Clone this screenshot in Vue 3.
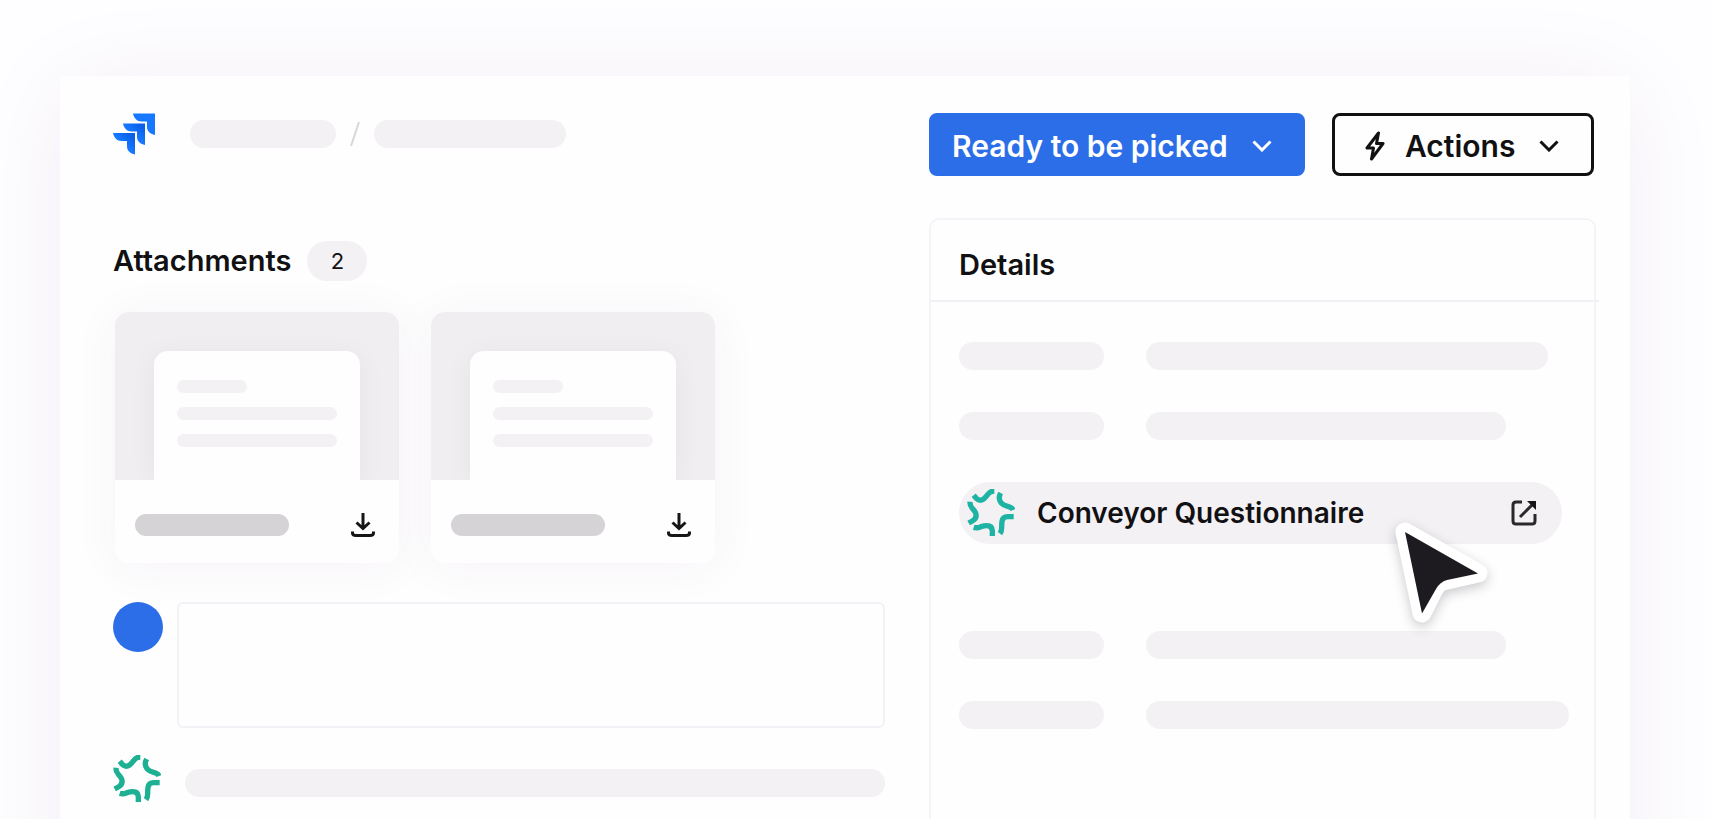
<script setup>
const attachments = [{ id: 1 }, { id: 2 }]

// widths of the value bars, in percent of their column
const rowsBefore = [95, 85]
const rowsAfter = [85, 100]

const spokes = [
  'M58 65 L66 74 Q76 84 88 76 Q93 72 100 63 Q107 52 120 52',
  'M139 58 Q130 74 140 87 Q147 95 160 98 Q173 101 176 109',
  'M178 129 H160 Q145 129 143 143 Q142 150 142 162 Q142 173 137 180',
  'M114 187 V171 Q113 156 98 156 Q90 156 80 159 Q68 164 58 161',
  'M43 148 L54 142 Q69 134 64 118 Q61 111 54 104 Q46 95 47 84',
]
</script>

<template>
  <main class="page">
    <section class="card">
      <div class="main">
        <nav class="crumbs" aria-label="Breadcrumb">
          <svg class="jira" viewBox="0 0 42 42" aria-hidden="true">
            <defs>
              <linearGradient id="fold" x1="1" y1="0" x2="0.3" y2="0.7">
                <stop offset="0.2" stop-color="#0b5fe8" />
                <stop offset="0.7" stop-color="#1677ff" />
              </linearGradient>
              <path id="piece" d="M0 0H22V21.500C17.500 20.500 14 18 14 13.500V8H8.500C4 8 1 4.500 0 0Z" />
            </defs>
            <use href="#piece" x="20" y="0.500" fill="#1677ff" />
            <use href="#piece" x="10" y="10.500" fill="url(#fold)" />
            <use href="#piece" x="0" y="20" fill="url(#fold)" />
          </svg>
          <span class="bar crumb"></span>
          <svg class="slash" viewBox="0 0 10 26" aria-hidden="true"><path d="M9 1L1 25" /></svg>
          <span class="bar crumb long"></span>
        </nav>

        <div class="heading">
          <h2>Attachments</h2>
          <span class="count">{{ attachments.length }}</span>
        </div>

        <ul class="files">
          <li v-for="file in attachments" :key="file.id" class="file">
            <div class="preview">
              <div class="sheet">
                <span class="line short"></span>
                <span class="line"></span>
                <span class="line"></span>
              </div>
            </div>
            <div class="file-foot">
              <span class="file-name"></span>
              <button class="download" aria-label="Download">
                <svg viewBox="0 0 24 26" aria-hidden="true">
                  <path d="M12 1V16M5.500 10.500L12 16.500L18.500 10.500M1.500 19.500V21Q1.500 23.500 5 23.500H19Q22.500 23.500 22.500 21V19.500" />
                </svg>
              </button>
            </div>
          </li>
        </ul>

        <div class="comment">
          <span class="avatar"></span>
          <textarea class="reply" aria-label="Comment"></textarea>
        </div>

        <div class="activity">
          <svg class="conveyor" viewBox="38 46 144 144" aria-hidden="true">
            <path v-for="d in spokes" :key="d" :d="d" />
          </svg>
          <span class="bar"></span>
        </div>
      </div>

      <div class="side">
        <div class="actions">
          <button class="btn status">
            Ready to be picked
            <svg class="chevron" viewBox="0 0 20 12" aria-hidden="true"><path d="M1.500 1.500L10 10L18.500 1.500" /></svg>
          </button>
          <button class="btn outline">
            <svg class="bolt" viewBox="0 0 20 30" aria-hidden="true">
              <path d="M13.500 2L2 17H8.500L6.500 28L18 12.500H11.500Z" />
            </svg>
            Actions
            <svg class="chevron" viewBox="0 0 20 12" aria-hidden="true"><path d="M1.500 1.500L10 10L18.500 1.500" /></svg>
          </button>
        </div>

        <section class="details">
          <h2 class="details-head">Details</h2>
          <div class="details-body">
            <div v-for="(width, i) in rowsBefore" :key="'before' + i" class="field">
              <span class="bar"></span>
              <span class="bar" :style="{ width: width + '%' }"></span>
            </div>
            <div class="link-row">
              <a class="link" href="#">
                <svg class="conveyor teal" viewBox="38 46 144 144" aria-hidden="true">
                  <path v-for="d in spokes" :key="d" :d="d" />
                </svg>
                <span class="link-text">Conveyor Questionnaire</span>
                <svg class="external" viewBox="0 0 26 26" aria-hidden="true">
                  <path d="M11 2H5Q2 2 2 5V21Q2 24 5 24H21Q24 24 24 21V14M9 17L23 3" />
                  <path d="M16 1H25V10Z" class="tip" />
                </svg>
              </a>
              <svg class="cursor" viewBox="0 0 116 126" aria-hidden="true">
                <path class="halo" d="M20 17L93 58L58 66Q52 68 48 76L37 98Z" />
                <path class="arrow" d="M20 17L93 58.500L62 65Q55 67 51 74L37 98.500Z" />
              </svg>
            </div>
            <div v-for="(width, i) in rowsAfter" :key="'after' + i" class="field">
              <span class="bar"></span>
              <span class="bar" :style="{ width: width + '%' }"></span>
            </div>
          </div>
        </section>
      </div>
    </section>
  </main>
</template>

<style>
body {
  margin: 0;
  background: #fff;
}
</style>

<style scoped>
* {
  box-sizing: border-box;
}
.page {
  display: flex;
  height: 100vh;
  padding: 76px 82px 0 60px;
  overflow: hidden;
  background: #fefdff;
  font-family: Inter, 'Liberation Sans', sans-serif;
  color: #111113;
}

/* the card runs off the bottom edge of the window */
.card {
  flex: 1;
  display: grid;
  grid-template-columns: minmax(0, 772fr) minmax(0, 667fr);
  column-gap: 44px;
  margin-bottom: -120px;
  padding: 37px 34px 0 53px;
  background: #fefefe;
  box-shadow: 0 8px 96px rgba(60, 10, 80, 0.06);
}

.bar {
  display: block;
  height: 28px;
  border-radius: 14px;
  background: #f3f1f4;
}

/* left column */
.main {
  min-width: 0;
}
.crumbs {
  display: flex;
  align-items: center;
  height: 41px;
}
.jira {
  width: 42px;
  height: 42px;
  margin-right: 35px;
}
.crumb {
  width: 146px;
}
.crumb.long {
  width: 192px;
}
.slash {
  width: 10px;
  height: 26px;
  margin: 0 14px;
  fill: none;
  stroke: #d8d5db;
  stroke-width: 2;
}

.heading {
  display: flex;
  align-items: center;
  gap: 16px;
  height: 40px;
  margin-top: 87px;
}
h2 {
  margin: 0;
  font-size: 29px;
  font-weight: 600;
  line-height: 40px;
}
.count {
  width: 60px;
  border-radius: 20px;
  background: #f3f1f4;
  font-size: 22px;
  line-height: 40px;
  text-align: center;
}

.files {
  display: flex;
  gap: 32px;
  margin: 31px 0 0;
  padding: 0 0 0 2px;
  list-style: none;
}
.file {
  width: 284px;
  border-radius: 14px;
  background: #fefefe;
  box-shadow: 0 4px 48px rgba(90, 20, 120, 0.05);
}
.preview {
  height: 168px;
  padding: 39px 39px 0;
  overflow: hidden;
  border-radius: 14px 14px 0 0;
  background: #f0eef1;
}
.sheet {
  display: flex;
  flex-direction: column;
  gap: 14px;
  height: 129px;
  padding: 29px 23px 0;
  border-radius: 14px 14px 0 0;
  background: #fefefe;
  box-shadow: 0 4px 28px rgba(30, 20, 40, 0.05);
}
.line {
  height: 13px;
  border-radius: 7px;
  background: #f3f1f4;
}
.line.short {
  width: 70px;
}
.file-foot {
  display: flex;
  align-items: center;
  justify-content: space-between;
  height: 83px;
  padding: 6px 24px 0 20px;
}
.file-name {
  width: 154px;
  height: 22px;
  border-radius: 11px;
  background: #d5d3d6;
}
.download {
  width: 24px;
  height: 26px;
  padding: 0;
  border: 0;
  background: transparent;
  cursor: pointer;
}
.download svg {
  display: block;
  fill: none;
  stroke: #161618;
  stroke-width: 3;
}

.comment {
  display: flex;
  gap: 14px;
  margin-top: 39px;
}
.avatar {
  flex: none;
  width: 50px;
  height: 50px;
  border-radius: 50%;
  background: #2c6ee8;
}
.reply {
  flex: 1;
  height: 126px;
  padding: 12px;
  border: 2px solid #f3f1f5;
  border-radius: 6px;
  background: #fefefe;
  font: inherit;
  resize: none;
}

.activity {
  display: flex;
  align-items: center;
  gap: 24px;
  margin-top: 27px;
}
.activity .bar {
  flex: 1;
  margin-top: 8px;
}
.conveyor {
  flex: none;
  width: 48px;
  height: 48px;
  fill: none;
  stroke: #1eb093;
  stroke-width: 16;
}
.conveyor.teal {
  stroke: #1fb3a3;
}

/* right column */
.side {
  display: flex;
  flex-direction: column;
  min-width: 0;
}
.actions {
  display: flex;
  gap: 27px;
}
.btn {
  display: flex;
  align-items: center;
  height: 63px;
  padding-top: 2px;
  border: 3px solid #111113;
  border-radius: 8px;
  background: #fefefe;
  color: #111113;
  font: inherit;
  font-size: 30px;
  font-weight: 600;
  cursor: pointer;
}
.btn.status {
  width: 376px;
  padding: 2px 20px 0;
  border-color: #2c6ee8;
  background: #2c6ee8;
  color: #fff;
}
.btn.outline {
  width: 262px;
  padding: 2px 30px 0;
}
.chevron {
  width: 20px;
  height: 12px;
  margin-left: 24px;
  fill: none;
  stroke: currentColor;
  stroke-width: 3;
}
.bolt {
  width: 20px;
  height: 30px;
  margin-right: 20px;
  fill: none;
  stroke: currentColor;
  stroke-width: 3;
  stroke-linejoin: round;
}

.details {
  flex: 1;
  margin-top: 42px;
  border: 2px solid #f6f3f8;
  border-radius: 10px;
}
/* the rule under the title overhangs the right border a little */
.details-head {
  margin-right: -5px;
  padding: 25px 28px 15px;
  border-bottom: 2px solid #f3f0f5;
}
.details-body {
  padding: 40px 25px 0 28px;
}
.field {
  display: grid;
  grid-template-columns: 145px 1fr;
  column-gap: 42px;
  margin-bottom: 42px;
}
.link-row {
  position: relative;
  margin: 0 7px 87px 0;
}
.link {
  display: flex;
  align-items: center;
  height: 62px;
  padding: 0 25px 0 8px;
  border-radius: 31px;
  background: #f3f1f4;
  color: #111113;
  text-decoration: none;
}
.link-text {
  flex: 1;
  margin-left: 22px;
  font-size: 28px;
  font-weight: 600;
}
.external {
  width: 26px;
  height: 26px;
  fill: none;
  stroke: #29282b;
  stroke-width: 3;
}
.external .tip {
  fill: #161618;
  stroke: none;
}

/* pointer over the link */
.cursor {
  position: absolute;
  top: 33px;
  right: 61px;
  width: 116px;
  height: 126px;
  filter: drop-shadow(0 4px 6px rgba(20, 15, 30, 0.22));
}
.halo {
  fill: #fff;
  stroke: #fff;
  stroke-width: 19;
  stroke-linejoin: round;
}
.arrow {
  fill: #1d1b20;
}
</style>
